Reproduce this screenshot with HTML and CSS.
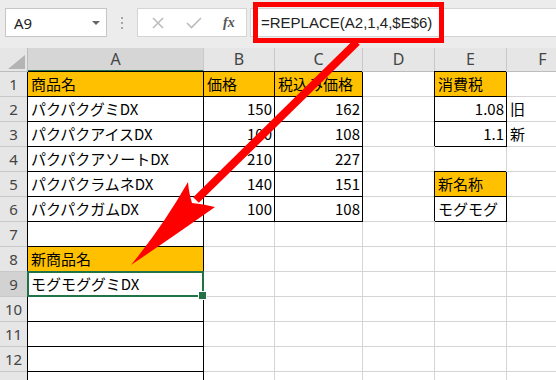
FILE: index.html
```html
<!DOCTYPE html>
<html lang="ja">
  <head>
    <meta charset="UTF-8" />
    <meta name="viewport" content="width=device-width, initial-scale=1.0" />
    <title>REPLACE</title>
    <link rel="stylesheet" href="styles.css">
  </head>
  <body>
    <div class="app">
        <div class="toolbar">
            <div class="namebox"><span>A9</span><span class="drop"></span></div>
            <div class="grip"><i></i><i></i><i></i></div>
            <div class="fbtns">
                <svg class="btn-x" width="12" height="12" viewBox="0 0 12 12"><path d="M1 1L11 11M11 1L1 11" /></svg>
                <svg class="btn-ok" width="16" height="12" viewBox="0 0 16 12"><path d="M1 6L5.5 10.5L15 1" /></svg>
                <span class="fx">fx</span>
            </div>
            <div class="formula">=REPLACE(A2,1,4,$E$6)</div>
        </div>

        <div class="sheet">
            <div class="corner"><span></span></div>
            <div class="ch on">A</div><div class="ch">B</div><div class="ch">C</div><div class="ch">D</div><div class="ch">E</div><div class="ch">F</div>

            <div class="rh">1</div>
            <div class="c b hd">商品名</div><div class="c b hd">価格</div><div class="c b hd">税込み価格</div><div class="c"></div><div class="c b hd">消費税</div><div class="c"></div>

            <div class="rh">2</div>
            <div class="c b">パクパクグミDX</div><div class="c b n">150</div><div class="c b n">162</div><div class="c"></div><div class="c b n">1.08</div><div class="c">旧</div>

            <div class="rh">3</div>
            <div class="c b">パクパクアイスDX</div><div class="c b n">100</div><div class="c b n">108</div><div class="c"></div><div class="c b n">1.1</div><div class="c">新</div>

            <div class="rh">4</div>
            <div class="c b">パクパクアソートDX</div><div class="c b n">210</div><div class="c b n">227</div><div class="c"></div><div class="c"></div><div class="c"></div>

            <div class="rh">5</div>
            <div class="c b">パクパクラムネDX</div><div class="c b n">140</div><div class="c b n">151</div><div class="c"></div><div class="c b hd">新名称</div><div class="c"></div>

            <div class="rh">6</div>
            <div class="c b">パクパクガムDX</div><div class="c b n">100</div><div class="c b n">108</div><div class="c"></div><div class="c b">モグモグ</div><div class="c"></div>

            <div class="rh">7</div>
            <div class="c b"></div><div class="c"></div><div class="c"></div><div class="c"></div><div class="c"></div><div class="c"></div>

            <div class="rh">8</div>
            <div class="c b hd">新商品名</div><div class="c"></div><div class="c"></div><div class="c"></div><div class="c"></div><div class="c"></div>

            <div class="rh on">9</div>
            <div class="c b sel">モグモググミDX</div><div class="c"></div><div class="c"></div><div class="c"></div><div class="c"></div><div class="c"></div>

            <div class="rh">10</div>
            <div class="c b"></div><div class="c"></div><div class="c"></div><div class="c"></div><div class="c"></div><div class="c"></div>

            <div class="rh">11</div>
            <div class="c b"></div><div class="c"></div><div class="c"></div><div class="c"></div><div class="c"></div><div class="c"></div>

            <div class="rh">12</div>
            <div class="c b"></div><div class="c"></div><div class="c"></div><div class="c"></div><div class="c"></div><div class="c"></div>

            <div class="rh">13</div>
            <div class="c b"></div><div class="c"></div><div class="c"></div><div class="c"></div><div class="c"></div><div class="c"></div>
        </div>

        <!-- annotation: red box round the formula and the arrow to A9 -->
        <div class="callout"></div>
        <svg class="arrow" width="556" height="380" viewBox="0 0 556 380">
            <line x1="357" y1="42" x2="196" y2="200" />
            <path d="M131 265 Q163 226 188 182 Q189 194 192 203 Q203 204 215 207 Q171 238 131 265 Z" />
        </svg>
    </div>
  </body>
</html>
```

FILE: styles.css
```css
* {
    margin: 0;
    padding: 0;
    box-sizing: border-box;
}

body {
    width: 556px;
    height: 380px;
    overflow: hidden;
    background: #fff;
    font-family: "Noto Sans CJK JP", sans-serif;
    color: #000;
}

.app {
    position: relative;
    width: 556px;
    height: 380px;
    overflow: hidden;
}

/* formula bar */
.toolbar {
    height: 48px;
    background: #ececec;
    display: flex;
    align-items: flex-start;
    padding: 8px 0 0 5px;
}

.namebox {
    width: 102px;
    height: 29px;
    background: #fff;
    border: 1px solid #c6c6c6;
    display: flex;
    align-items: center;
    justify-content: space-between;
    padding: 0 6px 0 8px;
    font: 15px "Noto Sans", sans-serif;
    color: #222;
}

.drop {
    width: 0;
    height: 0;
    border-left: 4px solid transparent;
    border-right: 4px solid transparent;
    border-top: 4px solid #666;
}

.grip {
    width: 30px;
    height: 29px;
    display: flex;
    flex-direction: column;
    align-items: center;
    justify-content: center;
    gap: 3px;
}

.grip i {
    width: 2px;
    height: 2px;
    background: #a6a6a6;
}

.fbtns {
    width: 110px;
    height: 29px;
    background: #fff;
    border: 1px solid #d4d4d4;
    display: flex;
    align-items: center;
    padding-left: 14px;
}

.fbtns svg {
    fill: none;
    stroke: #bcbcbc;
    stroke-width: 1.6;
}

.btn-ok {
    margin-left: 22px;
}

.fx {
    margin-left: 21px;
    font: italic bold 14px "Liberation Serif", serif;
    color: #555;
}

.formula {
    flex: 1;
    margin-left: 3px;
    height: 29px;
    background: #fff;
    border: 1px solid #d4d4d4;
    border-right: none;
    padding-left: 10px;
    font: 15px "Liberation Sans", sans-serif;
    line-height: 27px;
    color: #222;
}

/* worksheet */
.sheet {
    display: grid;
    grid-template-columns: 28px 176px 71px 88px 72px 72px 72px;
    grid-template-rows: 24px;
    grid-auto-rows: 25px;
}

.corner {
    background: #e6e6e6;
    border-right: 1px solid #bdbdbd;
    border-bottom: 1px solid #bdbdbd;
    position: relative;
}

.corner span {
    position: absolute;
    right: 2px;
    bottom: 2px;
    width: 0;
    height: 0;
    border-left: 17px solid transparent;
    border-bottom: 14px solid #b4b4b4;
}

.ch {
    background: #e6e6e6;
    border-right: 1px solid #c8c8c8;
    border-bottom: 1px solid #bdbdbd;
    text-align: center;
    font: 16px "Noto Sans", sans-serif;
    line-height: 23px;
    color: #444;
}

.ch.on {
    background: #d6d6d6;
    border-bottom: 2px solid #217346;
}

.rh {
    background: #e6e6e6;
    border-right: 1px solid #bdbdbd;
    border-bottom: 1px solid #c8c8c8;
    text-align: center;
    font: 15px "Noto Sans", sans-serif;
    line-height: 24px;
    color: #444;
}

.rh.on {
    background: #d2d2d2;
}

.c {
    border-right: 1px solid #d4d4d4;
    border-bottom: 1px solid #d4d4d4;
    padding: 0 2px 0 3px;
    font-size: 15px;
    line-height: 24px;
    white-space: nowrap;
}

.b {
    border-right-color: #000;
    border-bottom-color: #000;
    box-shadow: -1px -1px 0 #000;
}

.hd { background: #ffc000; }
.n { text-align: right; }

.sel {
    position: relative;
}

.sel::after {
    content: '';
    position: absolute;
    left: -1px;
    top: -1px;
    right: -1px;
    bottom: -1px;
    border: 2px solid #217346;
}

.sel::before {
    content: '';
    position: absolute;
    right: -4px;
    bottom: -4px;
    width: 7px;
    height: 7px;
    background: #217346;
    border: 1px solid #fff;
    z-index: 1;
}

/* annotation */
.callout {
    position: absolute;
    left: 253px;
    top: 2px;
    width: 191px;
    height: 41px;
    border: 5px solid #f00;
}

.arrow {
    position: absolute;
    left: 0;
    top: 0;
    pointer-events: none;
}

.arrow line {
    stroke: #f00;
    stroke-width: 8;
}

.arrow path {
    fill: #f00;
}
```
